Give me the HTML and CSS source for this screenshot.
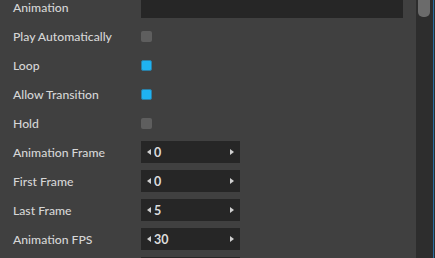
FILE: index.html
```html
<!DOCTYPE html>
<html>
<head>
<meta charset="utf-8">
<link rel="stylesheet" href="styles.css">
</head>
<body>
<div class="frame">
  <div class="panel">
    <div class="rows">
      <div class="row"><span class="label">Animation</span><div class="text-field"></div></div>
      <div class="row"><span class="label">Play Automatically</span><span class="check"></span></div>
      <div class="row"><span class="label">Loop</span><span class="check on"></span></div>
      <div class="row"><span class="label">Allow Transition</span><span class="check on"></span></div>
      <div class="row"><span class="label">Hold</span><span class="check"></span></div>
      <div class="row"><span class="label">Animation Frame</span><div class="num"><span class="arrow left"></span><span class="val">0</span><span class="arrow right"></span></div></div>
      <div class="row"><span class="label">First Frame</span><div class="num"><span class="arrow left"></span><span class="val">0</span><span class="arrow right"></span></div></div>
      <div class="row"><span class="label">Last Frame</span><div class="num"><span class="arrow left"></span><span class="val">5</span><span class="arrow right"></span></div></div>
      <div class="row"><span class="label">Animation FPS</span><div class="num"><span class="arrow left"></span><span class="val">30</span><span class="arrow right"></span></div></div>
      <div class="row"><span class="label"></span><div class="num"></div></div>
    </div>
  </div>
  <div class="scrollbar"><div class="thumb"></div></div>
  <div class="edge-blue"></div>
  <div class="edge-dark"></div>
</div>
</body>
</html>
```

FILE: styles.css
```css
html, body {
  margin: 0;
  padding: 0;
  width: 435px;
  height: 258px;
  overflow: hidden;
  background: #404040;
}
.frame {
  display: flex;
  width: 435px;
  height: 258px;
}
.panel {
  width: 416px;
  background: #404040;
  overflow: hidden;
}
.rows {
  display: flex;
  flex-direction: column;
  gap: 7px;
  margin-top: -4px;
}
.row {
  display: flex;
  align-items: center;
  height: 22px;
}
.label {
  width: 128px;
  padding-left: 13px;
  font-family: Lato, "Open Sans", sans-serif;
  font-size: 12.2px;
  font-weight: 500;
  color: #d6d6d6;
  white-space: nowrap;
}
.text-field {
  width: 262px;
  height: 22px;
  background: #262626;
}
.check {
  width: 11px;
  height: 11px;
  border-radius: 2px;
  background: #5e5e5e;
  box-sizing: border-box;
}
.check.on {
  background: #1fb3f2;
  border: 1px solid #2a7fa6;
}
.num {
  width: 99px;
  height: 22px;
  background: #262626;
  display: flex;
  align-items: center;
}
.val {
  font-family: Lato, "Open Sans", sans-serif;
  font-size: 12.5px;
  font-weight: bold;
  color: #dcdcdc;
  margin-left: 3px;
  flex: 1;
}
.arrow {
  width: 0;
  height: 0;
  border-top: 3px solid transparent;
  border-bottom: 3px solid transparent;
}
.arrow.left {
  margin-left: 6px;
  border-right: 4px solid #d0d0d0;
}
.arrow.right {
  margin-right: 6px;
  border-left: 4px solid #d0d0d0;
}
.scrollbar {
  width: 17px;
  background: #2d2d2d;
  display: flex;
  justify-content: center;
}
.thumb {
  width: 12px;
  height: 17px;
  background: #6b6b6b;
  border-radius: 0 0 5px 5px;
  margin-left: -2px;
}
.edge-blue {
  width: 1px;
  background: #2b6fa3;
}
.edge-dark {
  width: 1px;
  background: #2d2d2d;
}
```
